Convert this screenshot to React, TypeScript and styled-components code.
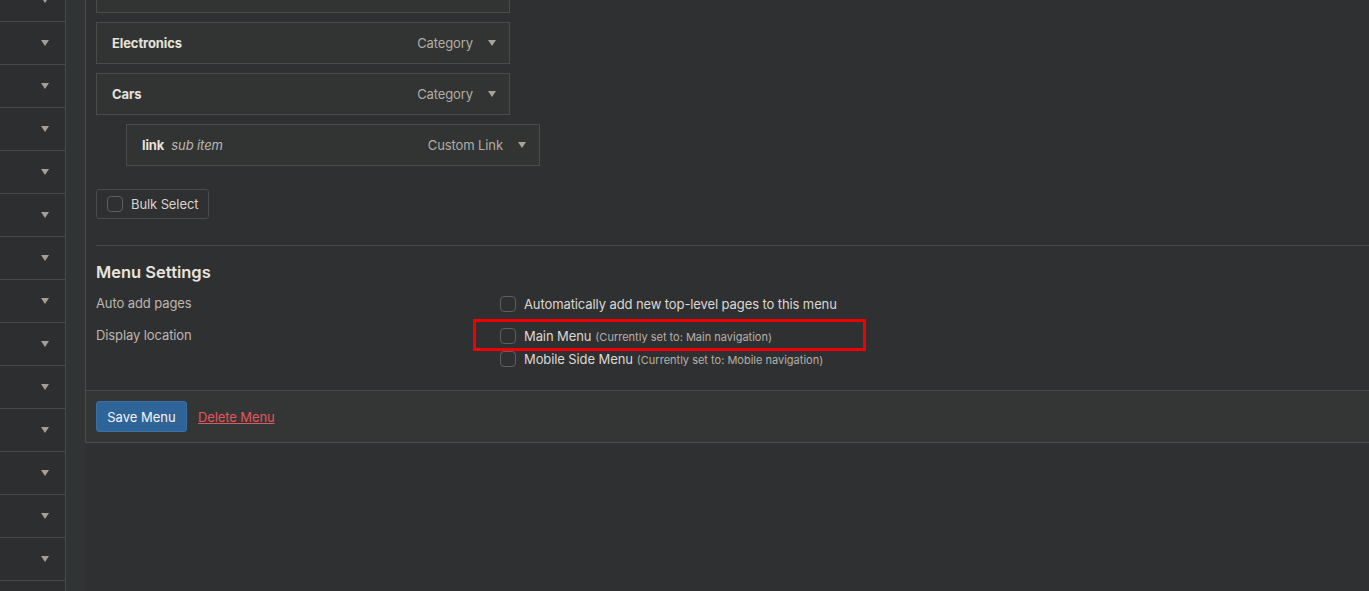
import styled, { createGlobalStyle } from 'styled-components'

const GlobalStyle = createGlobalStyle`
  html, body {
    margin: 0;
    height: 591px;
    overflow: hidden;
    background: #2f3032;
    font-family: Inter, "Noto Sans", "Liberation Sans", sans-serif;
    font-size: 13px;
    letter-spacing: -0.1px;
    color: #dcd8d2;
  }
  * {
    box-sizing: border-box;
  }
`

const Page = styled.div`
  display: flex;
  align-items: flex-start;
  height: 591px;
`

const SideColumn = styled.div`
  width: 66px;
  height: 591px;
  flex-shrink: 0;
  border-right: 1px solid #47494a;
  background: #2d2e30;
  overflow: hidden;
`

const SideRows = styled.div`
  margin-top: -21px;
`

const SideRow = styled.div`
  height: 43px;
  border-bottom: 1px solid #47494a;
  display: flex;
  align-items: center;
  justify-content: flex-end;
  padding-right: 16px;
`

const Arrow = styled.span<{ $color?: string }>`
  width: 0;
  height: 0;
  border-left: 4px solid transparent;
  border-right: 4px solid transparent;
  border-top: 6px solid ${(p) => p.$color || '#a69e92'};
`

const Gutter = styled.div`
  width: 19px;
  height: 591px;
  flex-shrink: 0;
  background: #313435;
`

const Panel = styled.div`
  flex: 1;
  display: flex;
  flex-direction: column;
  border-left: 1px solid #4a4c4d;
  border-bottom: 1px solid #4a4c4d;
  background: #2f3032;
`

const PanelBody = styled.div`
  padding: 0 0 20px 10px;
`

const MenuList = styled.div`
  display: flex;
  flex-direction: column;
  gap: 9px;
  margin-top: -29px;
`

const MenuItem = styled.div<{ $depth?: number }>`
  width: 414px;
  height: 42px;
  margin-left: ${(p) => (p.$depth || 0) * 30}px;
  border: 1px solid #4a4c4c;
  background: #323433;
  display: flex;
  align-items: center;
  padding: 0 13px 0 15px;
`

const ItemTitle = styled.span`
  font-weight: 700;
  color: #e6e2dc;
`

const ItemSub = styled.span`
  font-style: italic;
  color: #bdb7b0;
  margin-left: 7px;
`

const ItemType = styled.span`
  margin-left: auto;
  margin-right: 15px;
  color: #b3ada5;
`

const BulkButton = styled.label`
  margin-top: 23px;
  width: 113px;
  height: 30px;
  display: flex;
  align-items: center;
  gap: 8px;
  padding-left: 10px;
  border: 1px solid #4a4c4c;
  border-radius: 3px;
  color: #d8d3cc;
`

const Box = styled.span`
  width: 16px;
  height: 16px;
  flex-shrink: 0;
  border: 1px solid #5c5f61;
  border-radius: 4px;
  background: #2f3032;
`

const Divider = styled.div`
  height: 1px;
  background: #47494b;
  margin-top: 26px;
`

const SettingsTitle = styled.h3`
  margin: 15px 0 0;
  font-size: 16.5px;
  line-height: 22px;
  font-weight: 600;
  letter-spacing: 0;
  color: #e8e4de;
`

const SettingsGrid = styled.div`
  display: grid;
  grid-template-columns: 404px 1fr;
  row-gap: 9px;
  margin-top: 9px;
`

const FieldLabel = styled.div`
  line-height: 23px;
  color: #bdb7b0;
`

const OptionList = styled.div`
  display: flex;
  flex-direction: column;
`

const Option = styled.label`
  position: relative;
  height: 23px;
  display: flex;
  align-items: center;
  gap: 8px;
  color: #dcd8d2;
`

const OptionNote = styled.small`
  font-size: 11px;
  letter-spacing: 0;
  color: #b7b0a8;
  margin-left: 4px;
`

const Highlight = styled.span`
  position: absolute;
  left: -27px;
  top: -5px;
  width: 393px;
  height: 32px;
  border: 3px solid #f00000;
  pointer-events: none;
`

const Footer = styled.div`
  display: flex;
  align-items: center;
  gap: 11px;
  padding: 10px;
  border-top: 1px solid #47494b;
  background: #343635;
`

const SaveButton = styled.button`
  height: 31px;
  width: 91px;
  border: 1px solid #3b6fa6;
  border-radius: 3px;
  background: #2f6498;
  color: #f4f4f4;
  font-family: inherit;
  font-size: 13px;
`

const DeleteLink = styled.a`
  color: #e0575d;
  text-decoration: underline;
  font-size: 13px;
`

const items = [
  { title: '', type: '', depth: 0 },
  { title: 'Electronics', type: 'Category', depth: 0 },
  { title: 'Cars', type: 'Category', depth: 0 },
  { title: 'link', sub: 'sub item', type: 'Custom Link', depth: 1 },
]

export default function App() {
  return (
    <>
      <GlobalStyle />
      <Page>
        <SideColumn>
          <SideRows>
            {Array.from({ length: 15 }).map((_, i) => (
              <SideRow key={i}>
                <Arrow />
              </SideRow>
            ))}
          </SideRows>
        </SideColumn>
        <Gutter />
        <Panel>
          <PanelBody>
            <MenuList>
              {items.map((it, i) => (
                <MenuItem key={i} $depth={it.depth}>
                  <ItemTitle>{it.title}</ItemTitle>
                  {it.sub && <ItemSub>{it.sub}</ItemSub>}
                  <ItemType>{it.type}</ItemType>
                  <Arrow $color="#aaa296" />
                </MenuItem>
              ))}
            </MenuList>
            <BulkButton>
              <Box />
              Bulk Select
            </BulkButton>
            <Divider />
            <SettingsTitle>Menu Settings</SettingsTitle>
            <SettingsGrid>
              <FieldLabel>Auto add pages</FieldLabel>
              <OptionList>
                <Option>
                  <Box />
                  Automatically add new top-level pages to this menu
                </Option>
              </OptionList>
              <FieldLabel>Display location</FieldLabel>
              <OptionList>
                <Option>
                  <Box />
                  <span>
                    Main Menu
                    <OptionNote>(Currently set to: Main navigation)</OptionNote>
                  </span>
                  <Highlight />
                </Option>
                <Option>
                  <Box />
                  <span>
                    Mobile Side Menu
                    <OptionNote>(Currently set to: Mobile navigation)</OptionNote>
                  </span>
                </Option>
              </OptionList>
            </SettingsGrid>
          </PanelBody>
          <Footer>
            <SaveButton>Save Menu</SaveButton>
            <DeleteLink>Delete Menu</DeleteLink>
          </Footer>
        </Panel>
      </Page>
    </>
  )
}
